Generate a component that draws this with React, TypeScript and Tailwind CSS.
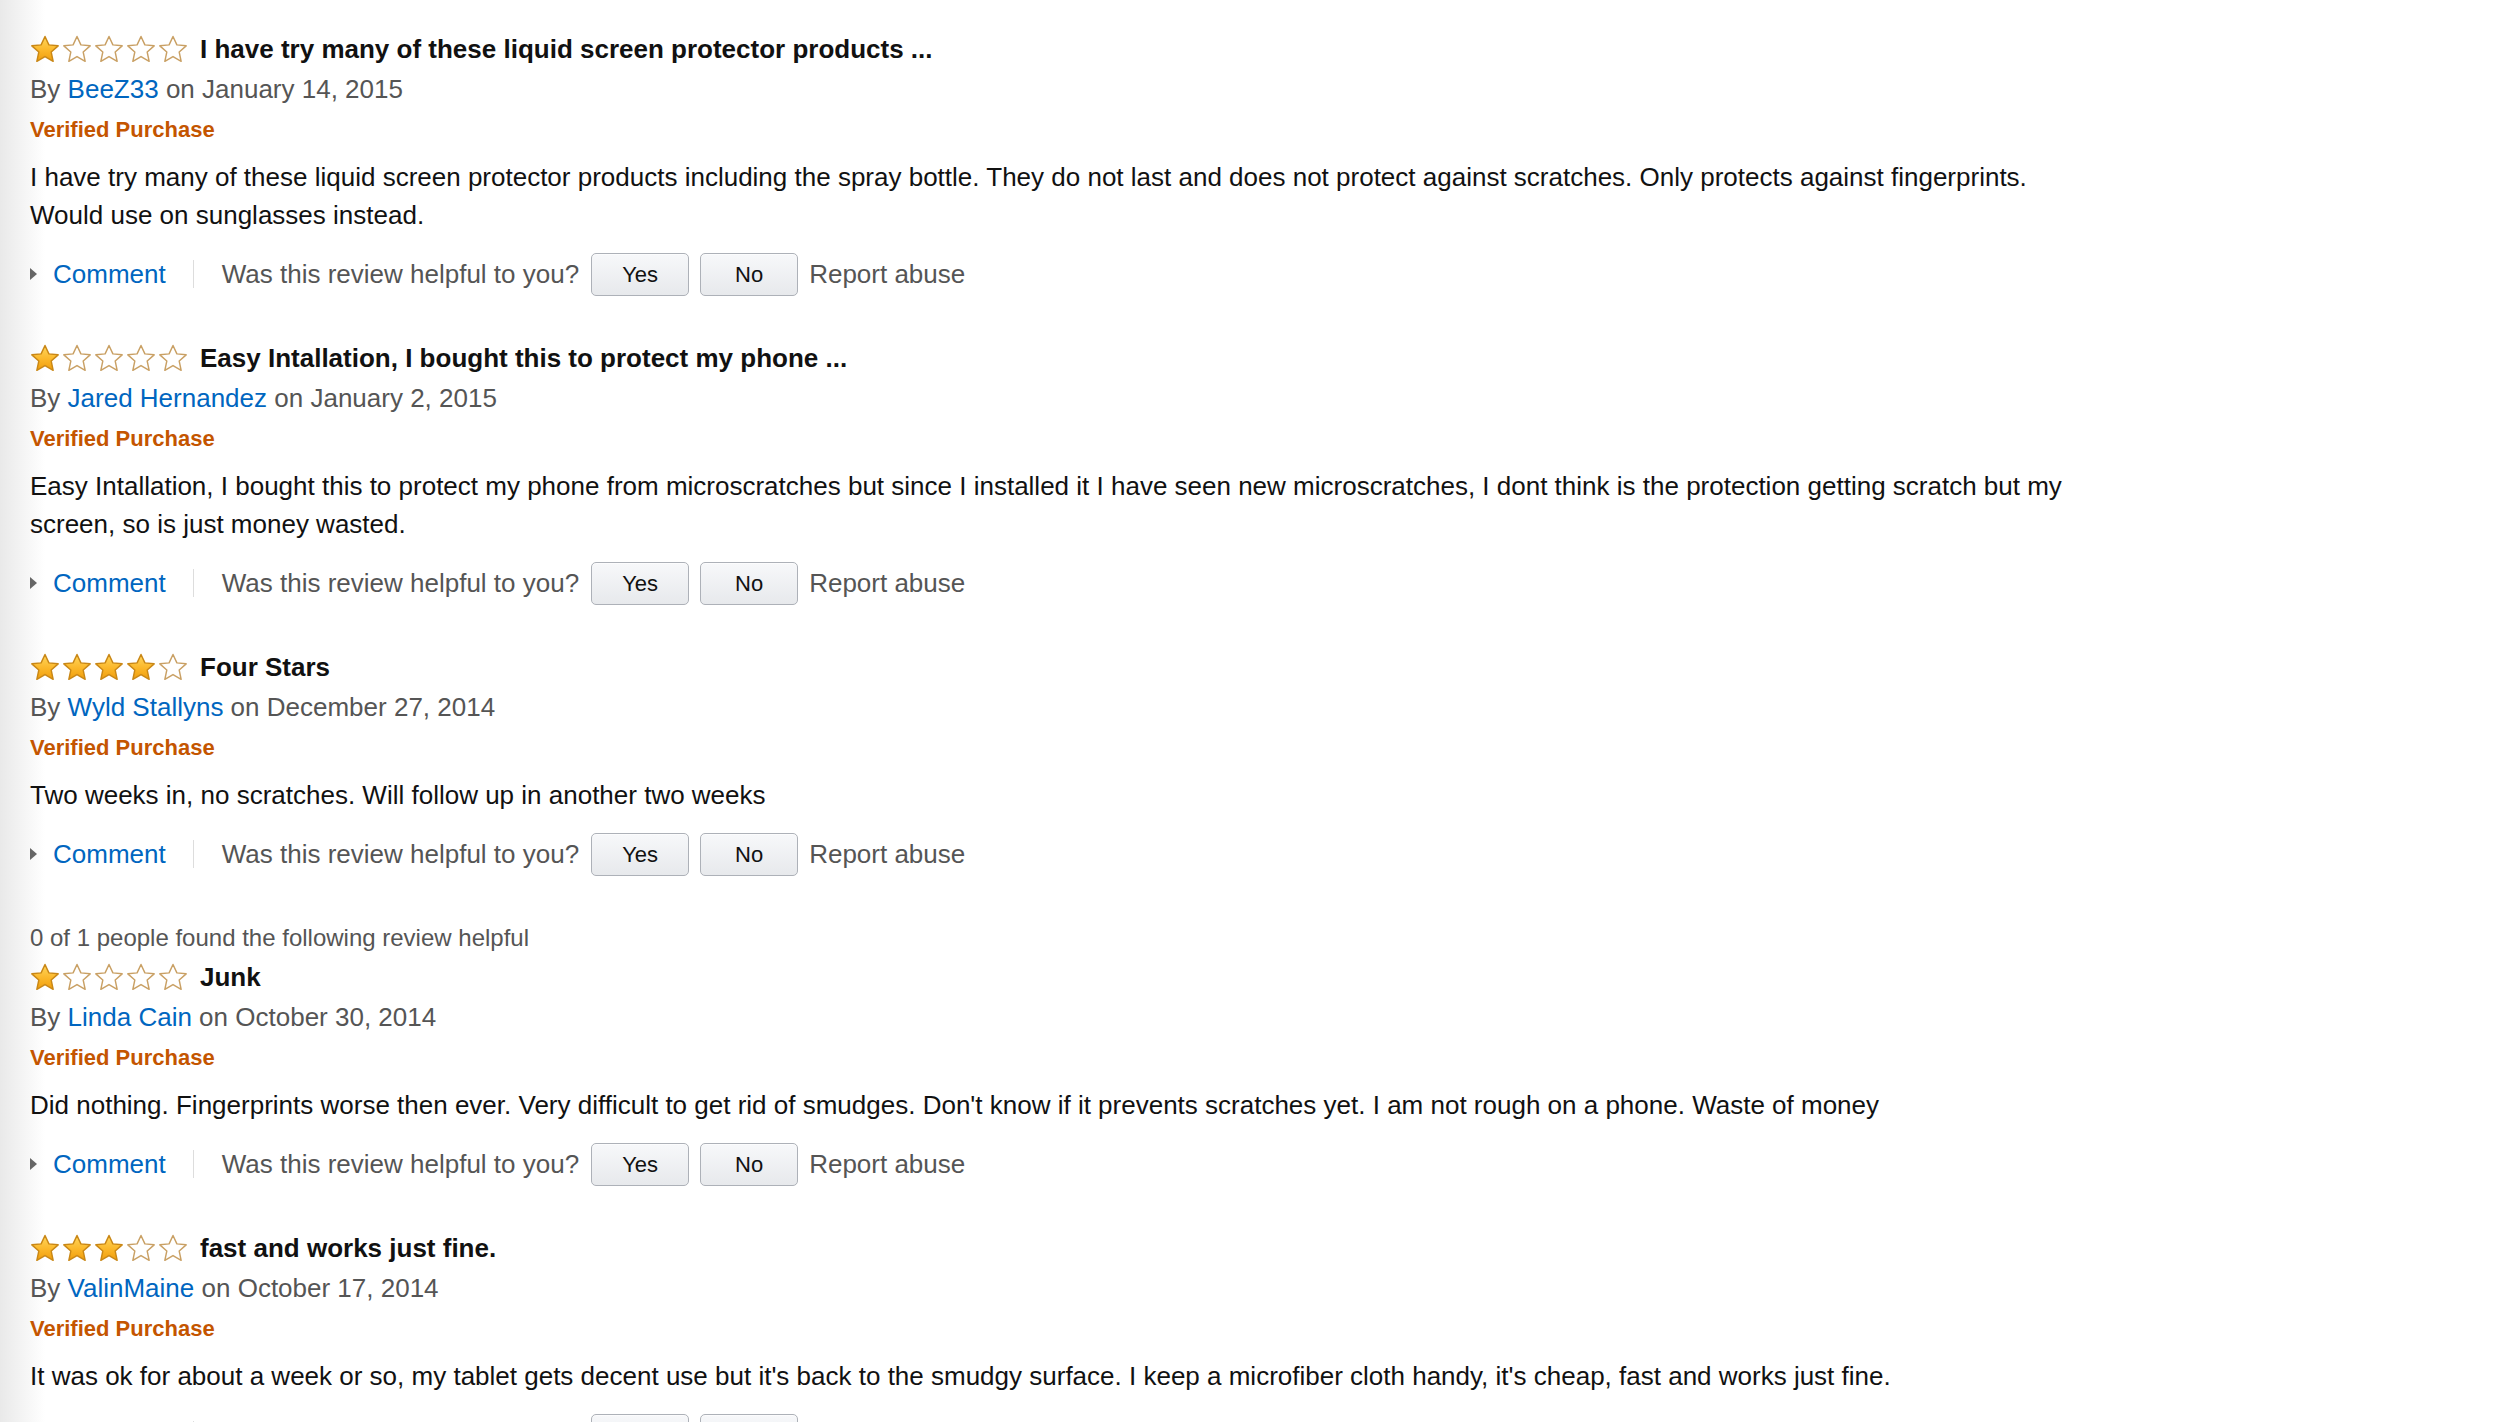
import React from "react";

type Review = {
  helpful?: string;
  stars: number;
  title: string;
  author: string;
  date: string;
  body: string;
};

const reviews: Review[] = [
  {
    stars: 1,
    title: "I have try many of these liquid screen protector products ...",
    author: "BeeZ33",
    date: "January 14, 2015",
    body:
      "I have try many of these liquid screen protector products including the spray bottle. They do not last and does not protect against scratches. Only protects against fingerprints. Would use on sunglasses instead.",
  },
  {
    stars: 1,
    title: "Easy Intallation, I bought this to protect my phone ...",
    author: "Jared Hernandez",
    date: "January 2, 2015",
    body:
      "Easy Intallation, I bought this to protect my phone from microscratches but since I installed it I have seen new microscratches, I dont think is the protection getting scratch but my screen, so is just money wasted.",
  },
  {
    stars: 4,
    title: "Four Stars",
    author: "Wyld Stallyns",
    date: "December 27, 2014",
    body: "Two weeks in, no scratches. Will follow up in another two weeks",
  },
  {
    helpful: "0 of 1 people found the following review helpful",
    stars: 1,
    title: "Junk",
    author: "Linda Cain",
    date: "October 30, 2014",
    body:
      "Did nothing. Fingerprints worse then ever. Very difficult to get rid of smudges. Don't know if it prevents scratches yet. I am not rough on a phone. Waste of money",
  },
  {
    stars: 3,
    title: "fast and works just fine.",
    author: "ValinMaine",
    date: "October 17, 2014",
    body:
      "It was ok for about a week or so, my tablet gets decent use but it's back to the smudgy surface. I keep a microfiber cloth handy, it's cheap, fast and works just fine.",
  },
];

const STAR =
  "12,1.2 15.2,8.1 22.8,8.9 17.1,14 18.7,21.6 12,17.7 5.3,21.6 6.9,14 1.2,8.9 8.8,8.1";

function Star({ filled, id }: { filled: boolean; id: string }) {
  return (
    <svg viewBox="0 0 24 23" className="w-[30px] h-[28px] block">
      <defs>
        <linearGradient id={id} x1="0" y1="0" x2="0" y2="1">
          <stop offset="0%" stopColor="#ffd75e" />
          <stop offset="55%" stopColor="#fbb72a" />
          <stop offset="100%" stopColor="#f09e0d" />
        </linearGradient>
      </defs>
      <polygon
        points={STAR}
        fill={filled ? `url(#${id})` : "#ffffff"}
        stroke={filled ? "#c98716" : "#c9a064"}
        strokeWidth="1.2"
        strokeLinejoin="round"
      />
    </svg>
  );
}

function Stars({ n, rid }: { n: number; rid: number }) {
  return (
    <div className="flex gap-[2px]">
      {[0, 1, 2, 3, 4].map((i) => (
        <Star key={i} filled={i < n} id={`g-${rid}-${i}`} />
      ))}
    </div>
  );
}

function VoteButton({ label }: { label: string }) {
  return (
    <button className="h-[43px] w-[98px] rounded-[5px] border border-[#adb1b8] bg-[linear-gradient(to_bottom,#f7f8fa,#e7e9ec)] text-[22px] text-[#111] shadow-[0_1px_0_rgba(255,255,255,0.6)_inset] flex items-center justify-center">
      {label}
    </button>
  );
}

function ReviewBlock({ r, idx }: { r: Review; idx: number }) {
  return (
    <div className="flex flex-col">
      {r.helpful && (
        <div className="h-[39px] flex items-center text-[24px] text-[#555]">
          {r.helpful}
        </div>
      )}
      <div className="h-[40px] flex items-center">
        <Stars n={r.stars} rid={idx} />
        <span className="ml-[12px] text-[26px] font-bold text-[#111]">
          {r.title}
        </span>
      </div>
      <div className="h-[40px] flex items-center text-[26px] text-[#555] whitespace-pre">
        <span>By </span>
        <span className="text-[#0066c0]">{r.author}</span>
        <span> on {r.date}</span>
      </div>
      <div className="h-[40px] flex items-center text-[22px] font-bold text-[#c45500]">
        Verified Purchase
      </div>
      <p className="mt-[9px] w-[2055px] text-[26px] leading-[38px] text-[#111]">
        {r.body}
      </p>
      <div className="mt-[18px] h-[44px] flex items-center text-[26px]">
        <svg viewBox="0 0 7 12" className="w-[7px] h-[12px] block">
          <polygon points="0,0 7,6 0,12" fill="#666" />
        </svg>
        <span className="ml-[16px] text-[#0066c0]">Comment</span>
        <span className="ml-[27px] w-px h-[28px] bg-[#dddddd]" />
        <span className="ml-[28px] text-[#555]">Was this review helpful to you?</span>
        <div className="ml-[12px] flex gap-[11px]">
          <VoteButton label="Yes" />
          <VoteButton label="No" />
        </div>
        <span className="ml-[11px] text-[#555]">Report abuse</span>
      </div>
    </div>
  );
}

export default function App() {
  return (
    <div
      className="min-h-screen w-full bg-[linear-gradient(to_right,#e9e9e9_0px,#ffffff_45px)] pl-[30px] pt-[29px] pb-[40px]"
      style={{ fontFamily: '"Liberation Sans", Arial, Helvetica, sans-serif' }}
    >
      <div className="flex flex-col gap-[42px]">
        {reviews.map((r, i) => (
          <ReviewBlock key={i} r={r} idx={i} />
        ))}
      </div>
    </div>
  );
}
